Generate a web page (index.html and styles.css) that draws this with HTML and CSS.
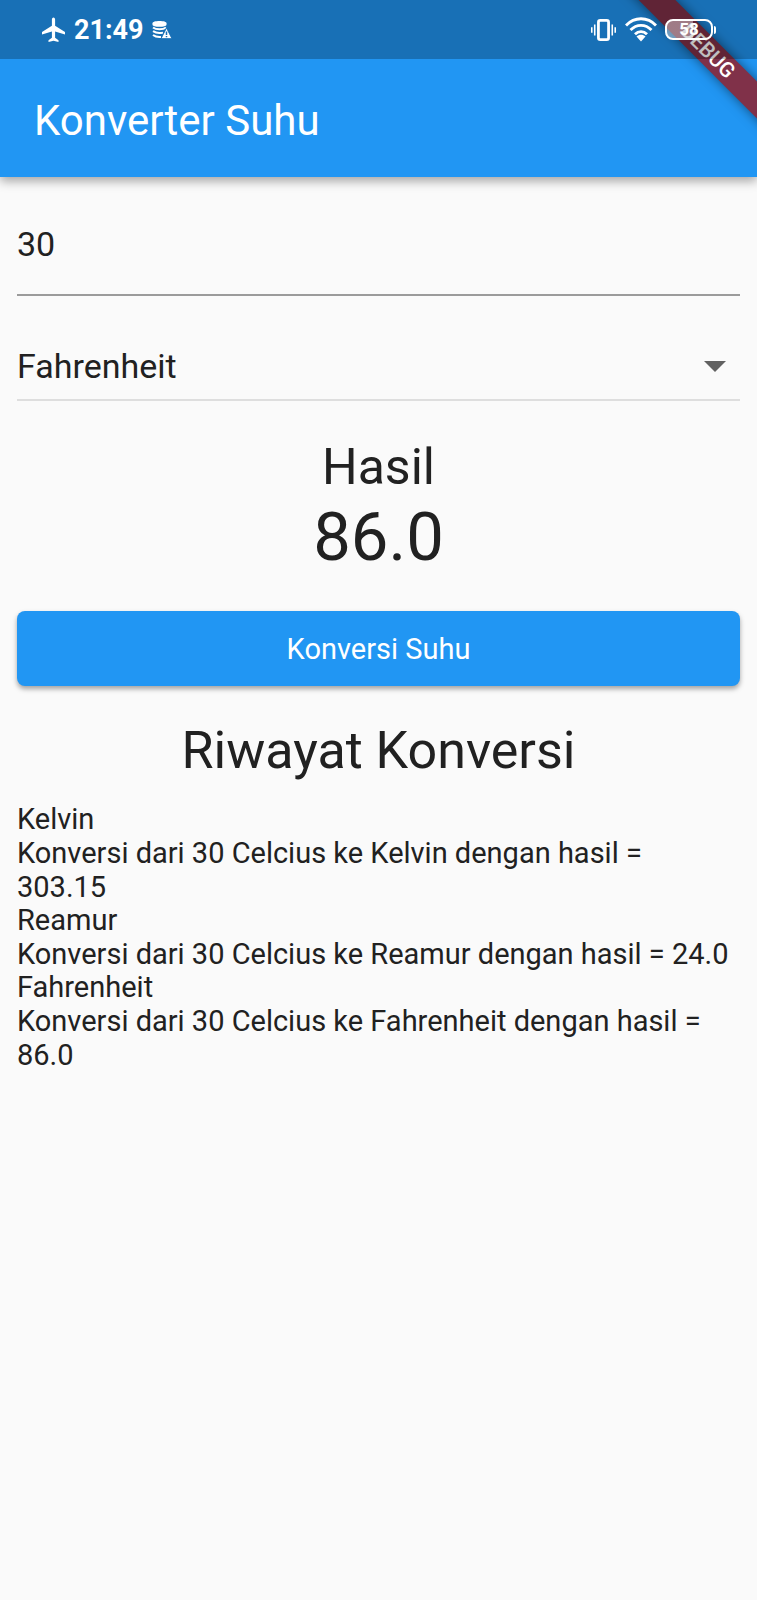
FILE: index.html
```html
<!DOCTYPE html>
<html lang="id">
<head>
<meta charset="utf-8">
<meta name="viewport" content="width=device-width, initial-scale=1">
<title>Konverter Suhu</title>
<link rel="stylesheet" href="styles.css">
</head>
<body>
<div class="debug-banner"><span class="debug-label">DEBUG</span></div>
<div class="status-bar">
  <div class="status-group">
    <svg class="icon-plane" viewBox="0 0 24 26" aria-hidden="true"><path fill="#fff" d="M12 0.500c1 0 1.600 1 1.600 2.200v6.100L23.500 15v2.600l-9.900-3.200v6.400l3.400 2.400v1.900L12 23.800l-5 1.300v-1.900l3.400-2.400v-6.400L.5 17.600V15l9.900-6.200V2.700C10.400 1.500 11 .5 12 .5z"/></svg>
    <span class="clock">21:49</span>
    <svg class="icon-data" viewBox="0 0 20 18" aria-hidden="true">
      <path fill="#fff" d="M.5 2.200C.5.900 3.500 0 7.500 0s7 .9 7 2.200v1.500c0 1.200-3 2.100-7 2.100s-7-.9-7-2.100z"/>
      <path fill="none" stroke="#fff" stroke-width="2" d="M1 6.500c3 2.300 10 2.300 13 0M1 10.200c3 2 7 2.200 10 1.400M1 14c2.500 1.900 5 2.200 8 1.900"/>
      <path fill="#fff" stroke="#1a70b6" d="M14.500 6.800 20 17.700H9z"/>
      <path stroke="#1a70b6" stroke-width="1.500" d="M14.500 10.500v3.600M14.500 15v1.300"/>
    </svg>
  </div>
  <div class="status-group">
    <svg class="icon-vibrate" viewBox="0 0 28 26" aria-hidden="true">
      <rect x="8.500" y="2.500" width="11" height="21" rx="2" fill="none" stroke="#fff" stroke-width="3"/>
      <path stroke="#fff" stroke-width="1.700" d="M4.500 7v12M1.300 10v6M23.500 7v12M26.700 10v6"/>
    </svg>
    <svg class="icon-wifi" viewBox="0 0 32 25" aria-hidden="true">
      <path fill="none" stroke="#fff" stroke-width="2.800" d="M1 8.500C9.500-.5 22.500-.5 31 8.500M5.500 13c6-6.300 15-6.300 21 0M10 17.300c3.500-3.600 8.500-3.600 12 0"/>
      <path fill="#fff" d="M11.500 19.500c2.500-2.300 6.500-2.300 9 0L16 24.500z"/>
    </svg>
    <div class="battery"><span class="battery-level">58</span></div>
  </div>
</div>
<header class="app-bar"><h1 class="app-title">Konverter Suhu</h1></header>
<main class="content">
  <input class="temp-input" type="text" inputmode="decimal" value="30" aria-label="Suhu dalam Celcius">
  <div class="unit-field">
    <select class="unit-select" aria-label="Satuan tujuan">
      <option>Kelvin</option>
      <option>Reamur</option>
      <option selected>Fahrenheit</option>
    </select>
    <svg class="unit-arrow" viewBox="0 0 22 11" aria-hidden="true"><path fill="#616161" d="M0 0h22L11 11z"/></svg>
  </div>
  <section class="result">
    <h2 class="result-title">Hasil</h2>
    <output class="result-value">86.0</output>
  </section>
  <button class="convert-button" type="button">Konversi Suhu</button>
  <h2 class="history-title">Riwayat Konversi</h2>
  <dl class="history">
    <dt>Kelvin</dt>
    <dd>Konversi dari 30 Celcius ke Kelvin dengan hasil = 303.15</dd>
    <dt>Reamur</dt>
    <dd>Konversi dari 30 Celcius ke Reamur dengan hasil = 24.0</dd>
    <dt>Fahrenheit</dt>
    <dd>Konversi dari 30 Celcius ke Fahrenheit dengan hasil = 86.0</dd>
  </dl>
</main>
</body>
</html>
```
FILE: styles.css
```css
* {
  box-sizing: border-box;
}

body {
  position: relative;
  margin: 0;
  min-height: 100vh;
  overflow-x: hidden;
  background: #fafafa;
  color: #212121;
  font-family: Roboto, "Liberation Sans", sans-serif;
  font-size: 29px;
}

h1, h2, dl, dd {
  margin: 0;
  font-weight: 400;
}

/* System status bar, a dark scrim over the app colour */
.status-bar {
  position: relative;
  z-index: 3;
  display: flex;
  justify-content: space-between;
  align-items: center;
  height: 59px;
  padding: 0 42px 0 41px;
  background: rgba(0, 0, 0, 0.25);
}

.status-group {
  display: flex;
  align-items: center;
  gap: 8px;
}

.clock {
  color: #fff;
  font-size: 27px;
  font-weight: 700;
  line-height: 32px;
}

.icon-plane { width: 25px; height: 26px; }
.icon-data { width: 20px; height: 18px; }
.icon-vibrate { width: 27px; height: 24px; }
.icon-wifi { width: 32px; height: 25px; }

.battery {
  position: relative;
  display: flex;
  align-items: center;
  justify-content: center;
  width: 48px;
  height: 21px;
  border: 2px solid #fff;
  border-radius: 8px;
  margin-right: 2px;
  background: linear-gradient(90deg, rgba(255, 255, 255, 0.4) 58%, transparent 58%);
}

.battery::after {
  content: "";
  position: absolute;
  top: 5px;
  right: -5px;
  width: 2px;
  height: 8px;
  border-radius: 0 2px 2px 0;
  background: #fff;
}

.battery-level {
  color: #fff;
  font-size: 17px;
  font-weight: 700;
  line-height: 17px;
}

/* Corner ribbon, laid over the app bar and under the status icons */
.debug-banner {
  position: absolute;
  top: 0;
  right: 0;
  z-index: 2;
  width: 150px;
  height: 150px;
  overflow: hidden;
}

.debug-label {
  position: absolute;
  top: 38px;
  left: -9px;
  width: 220px;
  height: 26px;
  transform: rotate(45deg);
  background: #803149;
  box-shadow: 0 0 12px rgba(0, 0, 0, 0.5);
  color: #fff;
  font-size: 21px;
  font-weight: 500;
  line-height: 26px;
  text-align: center;
}

.app-bar {
  display: flex;
  align-items: center;
  height: 177px;
  margin-top: -59px;
  padding: 64px 34px 0;
  background: #2196f3;
  box-shadow: 0 4px 10px rgba(0, 0, 0, 0.35);
}

.app-title {
  color: #fff;
  font-size: 42px;
  line-height: 50px;
}

.content {
  display: flex;
  flex-direction: column;
  padding: 17px;
}

.temp-input {
  width: 100%;
  height: 102px;
  padding: 0;
  border: 0;
  border-bottom: 2px solid #9b9b9b;
  border-radius: 0;
  outline: 0;
  background: transparent;
  color: inherit;
  font: 34px Roboto, "Liberation Sans", sans-serif;
}

.unit-field {
  display: grid;
  align-items: center;
  margin-top: 37px;
  border-bottom: 2px solid #dedede;
}

.unit-select {
  grid-area: 1 / 1;
  appearance: none;
  width: 100%;
  height: 66px;
  padding: 0;
  border: 0;
  outline: 0;
  background: transparent;
  color: inherit;
  font: 34px Roboto, "Liberation Sans", sans-serif;
}

.unit-arrow {
  grid-area: 1 / 1;
  justify-self: end;
  width: 22px;
  height: 11px;
  margin-right: 14px;
  pointer-events: none;
}

.result {
  display: flex;
  flex-direction: column;
  align-items: center;
  margin: 36px 0 34px;
}

.result-title,
.history-title {
  line-height: 60px;
  text-align: center;
}

.result-title {
  font-size: 50px;
}

.result-value {
  font-size: 67px;
  line-height: 80px;
}

.convert-button {
  height: 75px;
  border: 0;
  border-radius: 8px;
  background: #2196f3;
  box-shadow: 0 3px 5px rgba(0, 0, 0, 0.35);
  color: #fff;
  font: 29px Roboto, "Liberation Sans", sans-serif;
}

.history-title {
  margin: 35px 0 22px;
  font-size: 52px;
}

.history {
  padding-right: 8px;
}

.history dt {
  line-height: 33px;
}

.history dd {
  line-height: 34px;
}
```
